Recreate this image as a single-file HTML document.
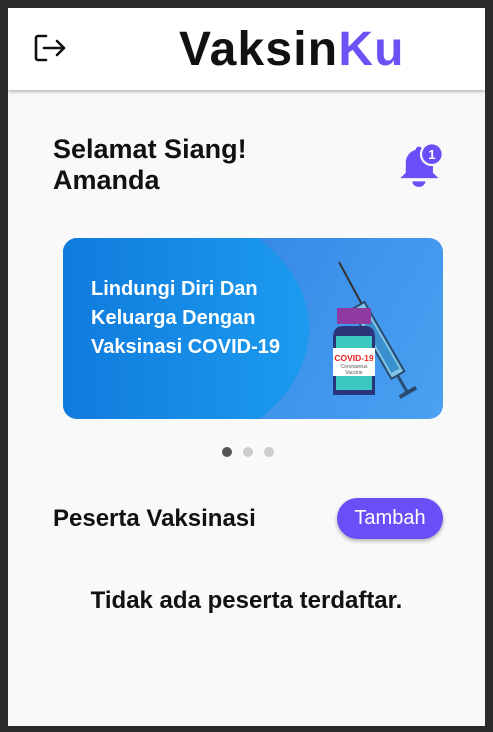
<!DOCTYPE html>
<html><head><style>
*{margin:0;padding:0;box-sizing:border-box}
body{width:493px;height:732px;background:#2b2b2b;font-family:"Liberation Sans",sans-serif;position:relative;overflow:hidden}
.app{position:absolute;left:8px;top:8px;width:477px;height:718px;background:#f9f9f9;overflow:hidden}
.hdr{position:absolute;left:0;top:0;width:477px;height:82px;background:#fff;box-shadow:0 2px 3px rgba(0,0,0,.25)}
.logo{position:absolute;left:171px;top:14px;font-size:48px;font-weight:bold;letter-spacing:1.2px;color:#111}
.logo span{color:#6c52f5}
.greet{position:absolute;left:45px;top:126px;font-size:27px;font-weight:bold;line-height:31px;color:#111}
.banner{position:absolute;left:55px;top:230px;width:380px;height:181px;border-radius:14px;overflow:hidden;background:linear-gradient(120deg,#2a79de,#4aa2f2)}
.circ{position:absolute;left:-120px;top:-40px;width:366px;height:262px;border-radius:50%;background:linear-gradient(90deg,#0b6bd4,#1b9bef)}
.btxt{position:absolute;left:28px;top:37px;color:#fff;font-weight:bold;font-size:20px;line-height:29px}
.dots{position:absolute;top:436px;left:214px}
.dots i{display:inline-block;width:10px;height:10px;border-radius:50%;background:#ccc;margin-right:11px}
.sec{position:absolute;left:45px;top:497px;font-size:24px;font-weight:bold;color:#111}
.btn{position:absolute;left:329px;top:490px;width:106px;height:41px;border-radius:21px;background:#6c4ef8;color:#fff;font-size:20px;text-align:center;line-height:41px;box-shadow:0 2px 4px rgba(0,0,0,.3)}
.empty{position:absolute;left:0;width:477px;top:579px;text-align:center;font-size:24px;font-weight:bold;color:#111}
</style></head><body>
<div class="app">
<div class="hdr">
<svg style="position:absolute;left:26px;top:26px" width="32" height="28" viewBox="0 0 32 28" fill="none" stroke="#111" stroke-width="2.6" stroke-linecap="round" stroke-linejoin="round"><path d="M12 2H4a2 2 0 0 0-2 2v20a2 2 0 0 0 2 2h8"/><path d="M10 14h20M23 7l7 7-7 7"/></svg>
<div class="logo">Vaksin<span>Ku</span></div>
</div>
<div class="greet">Selamat Siang!<br>Amanda</div>
<svg style="position:absolute;left:388px;top:131px" width="50" height="50" viewBox="0 0 46 46"><path fill="#6c4ef8" d="M21 7a3 3 0 0 1 3 3 12 12 0 0 1 10 12v9l5 5H4l5-5v-9a12 12 0 0 1 9-12 3 3 0 0 1 3-3z"/><path fill="#6c4ef8" d="M15 39h12a6 5 0 0 1-12 0z"/><circle cx="33" cy="14" r="11" fill="#f9f9f9"/><circle cx="33" cy="14" r="9" fill="#6c4ef8"/><text x="33" y="18.5" font-size="12" font-weight="bold" fill="#fff" text-anchor="middle" font-family="Liberation Sans">1</text></svg>
<div class="banner"><div class="circ"></div>
<div class="btxt">Lindungi Diri Dan<br>Keluarga Dengan<br>Vaksinasi COVID-19</div>
<svg style="position:absolute;left:262px;top:22px" width="100" height="140" viewBox="0 0 100 140">
<line x1="14" y1="2" x2="40" y2="50" stroke="#333" stroke-width="2"/>
<g transform="rotate(-30 55 85)"><rect x="48" y="40" width="15" height="80" fill="#7fc6e6" stroke="#2a4a70" stroke-width="2"/><rect x="51" y="60" width="9" height="55" fill="#3a8fcf"/><line x1="55" y1="120" x2="55" y2="140" stroke="#2a4a70" stroke-width="3"/><rect x="46" y="138" width="19" height="4" fill="#2a4a70"/></g>
<rect x="12" y="48" width="34" height="16" fill="#8e3aa0"/>
<path d="M8 78q0-12 10-12h22q10 0 10 12v57H8z" fill="#2a3478"/>
<rect x="11" y="76" width="36" height="54" fill="#3cc8c0"/>
<rect x="8" y="88" width="42" height="28" fill="#fff"/>
<text x="29" y="101" font-size="8.5" font-weight="bold" fill="#e22" text-anchor="middle" font-family="Liberation Sans">COVID-19</text>
<text x="29" y="108" font-size="5" fill="#555" text-anchor="middle" font-family="Liberation Sans">Coronavirus</text>
<text x="29" y="114" font-size="5" fill="#555" text-anchor="middle" font-family="Liberation Sans">Vaccine</text>
</svg>
</div>
<div class="dots"><i style="background:#555"></i><i></i><i></i></div>
<div class="sec">Peserta Vaksinasi</div>
<div class="btn">Tambah</div>
<div class="empty">Tidak ada peserta terdaftar.</div>
</div>
</body></html>
